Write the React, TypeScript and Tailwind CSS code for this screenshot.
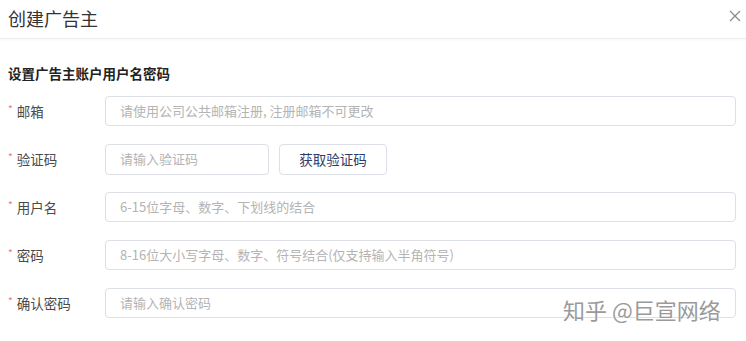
import React from 'react'

const rows = [
  { label: '邮箱', placeholder: '请使用公司公共邮箱注册, 注册邮箱不可更改' },
  { label: '验证码', placeholder: '请输入验证码', code: true },
  { label: '用户名', placeholder: '6-15位字母、数字、下划线的结合' },
  { label: '密码', placeholder: '8-16位大小写字母、数字、符号结合(仅支持输入半角符号)' },
  { label: '确认密码', placeholder: '请输入确认密码' },
]

export default function App() {
  return (
    <div
      className="relative w-[746px] h-[341px] bg-white overflow-hidden"
      style={{ fontFamily: '"Noto Sans CJK SC", "Noto Sans", sans-serif' }}
    >
      {/* header */}
      <div className="flex items-center justify-between h-[39px] pl-2 pr-[5px] border-b border-[#ececec] shadow-[0_1px_2px_rgba(0,0,0,0.04)]">
        <h1 className="text-[18px] leading-none text-[#333] -mt-[3px]">创建广告主</h1>
        <button className="text-[#888] -mt-[6px]">
          <svg width="12" height="12" viewBox="0 0 12 12" fill="none" stroke="currentColor" strokeWidth="1.2">
            <path d="M1 1L11 11M11 1L1 11" />
          </svg>
        </button>
      </div>

      <div className="px-2 pt-[25px]">
        <h2 className="text-[13.5px] leading-[18px] font-bold text-[#222]">设置广告主账户用户名密码</h2>

        <div className="mt-[14px] flex flex-col gap-[18px]">
          {rows.map((r) => (
            <div key={r.label} className="flex items-center h-[30px]">
              <div className="w-[97px] flex items-center text-[13.5px] text-[#4a4a4a]">
                <span className="text-[#e07a7a] text-[10px] mr-[4px] -mt-[6px]">*</span>
                {r.label}
              </div>
              {r.code ? (
                <div className="flex gap-[10px]">
                  <div className="w-[164px] h-[31px] border border-[#dcdfe6] rounded-[4px] flex items-center px-[14px] text-[13px] text-[#b4b4b4]">
                    {r.placeholder}
                  </div>
                  <button className="w-[108px] h-[31px] border border-[#dcdfe6] rounded-[4px] text-[13.5px] text-[#2f3d6a]">
                    获取验证码
                  </button>
                </div>
              ) : (
                <div className="w-[631px] h-[30px] border border-[#dcdfe6] rounded-[4px] flex items-center px-[14px] text-[13px] text-[#b4b4b4]">
                  {r.placeholder}
                </div>
              )}
            </div>
          ))}
        </div>
      </div>

      {/* watermark */}
      <div className="absolute left-[563px] top-[294px] text-[22px] leading-[30px] text-[#9a9a9a] [text-shadow:0_0_2px_#fff,0_0_2px_#fff]">
        知乎 @巨宣网络
      </div>
    </div>
  )
}
